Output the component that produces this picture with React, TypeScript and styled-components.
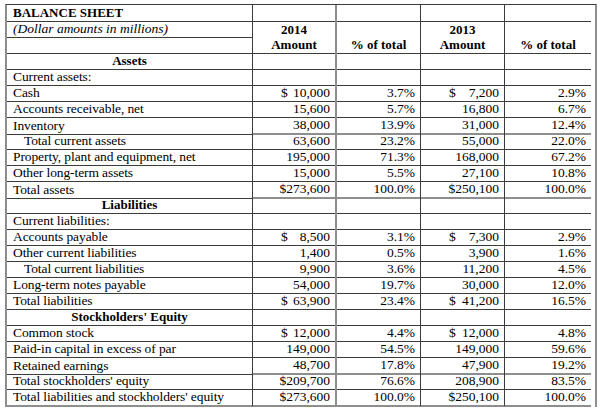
import React from "react";
import styled, { createGlobalStyle, css } from "styled-components";

const Global = createGlobalStyle`
  html, body { margin: 0; padding: 0; background: #fff; }
  body { font-family: "Liberation Serif", "Times New Roman", serif; color: #000; }
`;

const LINE = "#3c3c3c";
const SOFT = "#8e8e8e";

const Page = styled.div`
  padding: 4px 0 0 5px;
`;

const Sheet = styled.div`
  display: flex;
  flex-direction: column;
  width: 588px;
  border-top: 1px solid ${LINE};
  border-left: 2px solid ${SOFT};
  border-right: 2px solid ${SOFT};
  font-size: 13px;
`;

const Row = styled.div<{ $h: number }>`
  display: grid;
  grid-template-columns: 246px 84px 84px 84px 86px;
  height: ${(p) => p.$h}px;
`;

type Kind = "title" | "italic" | "section" | "indent" | "plain";

const LabelCell = styled.div<{ $kind: Kind; $closing?: boolean }>`
  box-sizing: border-box;
  display: flex;
  align-items: flex-end;
  padding: 0 0 1px 6px;
  line-height: 15px;
  white-space: nowrap;
  font-size: 13.5px;
  letter-spacing: -0.1px;
  border-right: 1px solid ${LINE};
  border-bottom: ${(p) => (p.$closing ? `2px solid ${SOFT}` : `1px solid ${LINE}`)};
  ${(p) =>
    p.$kind === "title" &&
    css`
      font-weight: bold;
      font-size: 13px;
      letter-spacing: 0;
    `}
  ${(p) =>
    p.$kind === "italic" &&
    css`
      font-style: italic;
      letter-spacing: 0;
    `}
  ${(p) =>
    p.$kind === "section" &&
    css`
      font-weight: bold;
      font-size: 13px;
      letter-spacing: 0;
      justify-content: center;
      padding-left: 0;
    `}
  ${(p) => p.$kind === "indent" && css`padding-left: 17px;`}
`;

type Rule = "line" | "none" | "double";

const NumCell = styled.div<{ $rule: Rule; $header?: boolean; $soft?: boolean; $last?: boolean }>`
  box-sizing: border-box;
  display: flex;
  align-items: flex-end;
  justify-content: ${(p) => (p.$header ? "center" : "flex-end")};
  padding: 0 ${(p) => (p.$header ? 0 : 5)}px 1px 0;
  line-height: 15px;
  white-space: nowrap;
  font-size: ${(p) => (p.$header ? 13 : 13.5)}px;
  font-weight: ${(p) => (p.$header ? "bold" : "normal")};
  border-right: ${(p) => (p.$last ? "none" : p.$soft ? `2px solid ${SOFT}` : `1px solid ${LINE}`)};
  border-bottom: ${(p) =>
    p.$rule === "none" ? "none" : p.$rule === "double" ? `2px solid ${SOFT}` : `1px solid ${LINE}`};
`;

const Dollar = styled.span`
  margin-right: auto;
  padding-left: 28px;
`;

type RowData = {
  label: string;
  kind?: Kind;
  cells?: string[];
  header?: boolean;
  rule?: Rule;
  h?: number;
};

const rows: RowData[] = [
  { label: "BALANCE SHEET", kind: "title" },
  { label: "(Dollar amounts in millions)", kind: "italic", cells: ["2014", "", "2013", ""], header: true, rule: "none" },
  { label: "", cells: ["Amount", "% of total", "Amount", "% of total"], header: true },
  { label: "Assets", kind: "section" },
  { label: "Current assets:" },
  { label: "Cash", cells: ["$ 10,000", "3.7%", "$ 7,200", "2.9%"] },
  { label: "Accounts receivable, net", cells: ["15,600", "5.7%", "16,800", "6.7%"] },
  { label: "Inventory", cells: ["38,000", "13.9%", "31,000", "12.4%"], rule: "double" },
  { label: "Total current assets", kind: "indent", cells: ["63,600", "23.2%", "55,000", "22.0%"] },
  { label: "Property, plant and equipment, net", cells: ["195,000", "71.3%", "168,000", "67.2%"] },
  { label: "Other long-term assets", cells: ["15,000", "5.5%", "27,100", "10.8%"] },
  { label: "Total assets", cells: ["$273,600", "100.0%", "$250,100", "100.0%"], rule: "double" },
  { label: "Liabilities", kind: "section" },
  { label: "Current liabilities:" },
  { label: "Accounts payable", cells: ["$ 8,500", "3.1%", "$ 7,300", "2.9%"] },
  { label: "Other current liabilities", cells: ["1,400", "0.5%", "3,900", "1.6%"] },
  { label: "Total current liabilities", kind: "indent", cells: ["9,900", "3.6%", "11,200", "4.5%"] },
  { label: "Long-term notes payable", cells: ["54,000", "19.7%", "30,000", "12.0%"] },
  { label: "Total liabilities", cells: ["$ 63,900", "23.4%", "$ 41,200", "16.5%"] },
  { label: "Stockholders' Equity", kind: "section" },
  { label: "Common stock", cells: ["$ 12,000", "4.4%", "$ 12,000", "4.8%"] },
  { label: "Paid-in capital in excess of par", cells: ["149,000", "54.5%", "149,000", "59.6%"] },
  { label: "Retained earnings", cells: ["48,700", "17.8%", "47,900", "19.2%"], rule: "double" },
  { label: "Total stockholders' equity", cells: ["$209,700", "76.6%", "208,900", "83.5%"] },
  { label: "Total liabilities and stockholders' equity", cells: ["$273,600", "100.0%", "$250,100", "100.0%"], rule: "double", h: 18 },
];

function renderValue(v: string) {
  if (v.startsWith("$ ")) {
    return (
      <>
        <Dollar>$</Dollar>
        <span>{v.slice(2)}</span>
      </>
    );
  }
  return v;
}

export default function App() {
  return (
    <Page>
      <Global />
      <Sheet>
        {rows.map((r, i) => {
          const cells = r.cells ?? ["", "", "", ""];
          const rule: Rule = r.rule ?? "line";
          return (
            <Row key={i} $h={r.h ?? 16}>
              <LabelCell $kind={r.kind ?? "plain"} $closing={i === rows.length - 1}>
                {r.label}
              </LabelCell>
              {cells.map((c, j) => (
                <NumCell key={j} $rule={rule} $header={r.header} $soft={j === 0} $last={j === 3}>
                  {renderValue(c)}
                </NumCell>
              ))}
            </Row>
          );
        })}
      </Sheet>
    </Page>
  );
}
